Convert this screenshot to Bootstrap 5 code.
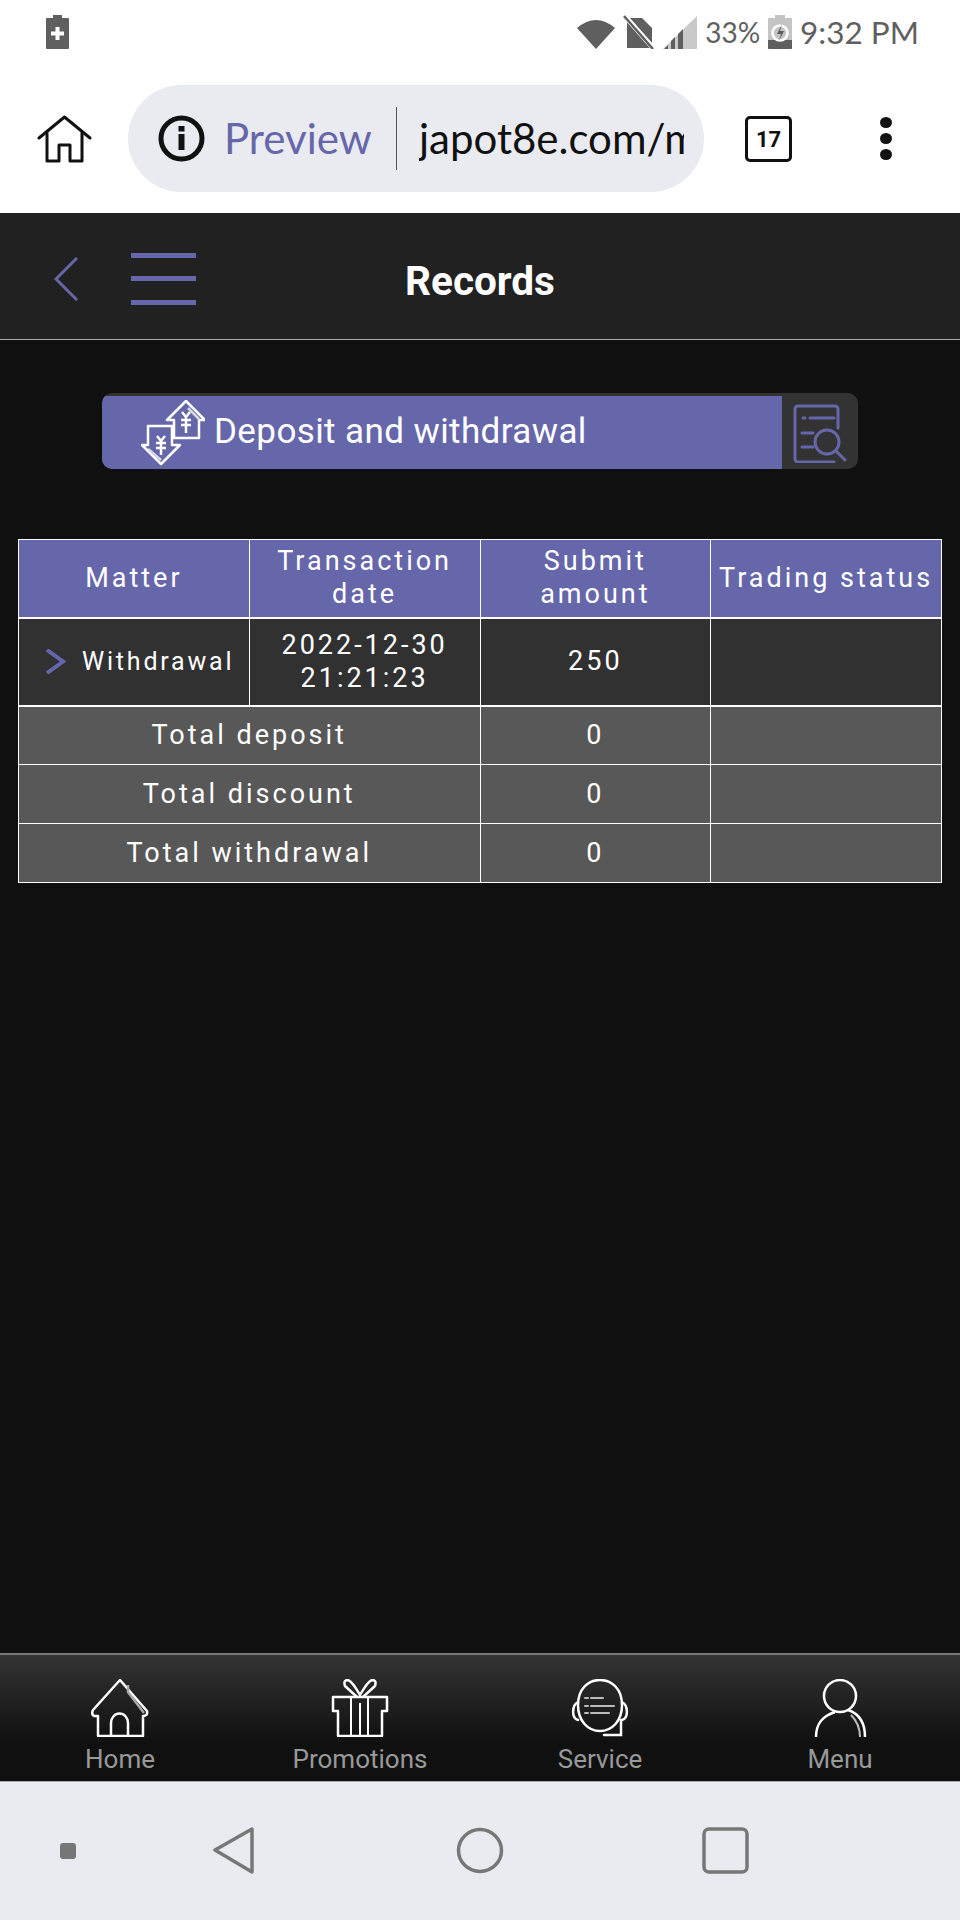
<!DOCTYPE html>
<html lang="en">
<head>
  <meta charset="UTF-8">
  <title>Records</title>
  <meta name="viewport" content="width=device-width, initial-scale=1.0"/>
  <link href="https://cdn.jsdelivr.net/npm/bootstrap@5.3.3/dist/css/bootstrap.min.css" rel="stylesheet">
  <style>
    body {
      background: #101010;
      font-family: Roboto, sans-serif;
    }
    .phone-page {
      height: 1920px;
      width: 960px;
      overflow: hidden;
    }
    .status-strip {
      height: 60px;
      background: #fff;
      padding: 15px 41px 0 46px;
      color: #5f5f5f;
      font-family: Lato, sans-serif;
      font-size: 31.500px;
      line-height: 34px;
    }
    .status-pct { font-size: 28px; }
    .browser-strip {
      height: 153px;
      background: #fff;
      padding: 25px 0 0 37px;
    }
    .home-icon { margin-top: 30px; }
    .url-pill {
      width: 576px;
      height: 107px;
      margin-left: 36px;
      margin-right: 41px;
      padding-left: 30px;
      background: #e9ebf0;
      border-radius: 54px;
      font-family: Lato, sans-serif;
      font-size: 42px;
      white-space: nowrap;
      overflow: hidden;
    }
    .url-preview { color: #6667aa; width: 172px; margin-left: 19px; }
    .url-line { width: 1px; height: 63px; background: #555; }
    .url-text { color: #111; margin-left: 22px; width: 265px; overflow: hidden; }
    .tabs-box {
      width: 47px;
      height: 46px;
      margin-top: 31px;
      border: 3px solid #111;
      border-radius: 5px;
      font-size: 22px;
      font-weight: 700;
      color: #111;
    }
    .more-dots { margin: 32px 0 0 88px; gap: 5px; }
    .more-dots span { width: 12px; height: 11px; background: #111; border-radius: 50%; }
    .top-header {
      height: 127px;
      background: #212121;
      border-bottom: 1px solid #aaa;
      padding: 5px 0 0 54px;
    }
    .hamburger { margin-left: 53px; }
    .top-title {
      left: 0;
      right: 0;
      top: 0;
      line-height: 136px;
      color: #fff;
      font-size: 40.500px;
      font-weight: 700;
      text-align: center;
    }
    .main-area { padding: 53px 18px 0; }
    .record-tab {
      margin: 0 84px 70px;
      height: 76px;
      border-radius: 10px;
      background: #333;
      overflow: hidden;
    }
    .record-tab-left {
      width: 680px;
      background: #6667aa;
      margin-top: 3px;
      padding-left: 39px;
      color: #fff;
      font-size: 35px;
      letter-spacing: .4px;
    }
    .record-tab-left span { margin-left: 9px; }
    .search-doc { margin-top: 4px; }
    .record-table {
      table-layout: fixed;
      margin: 0;
      --bs-table-color: #fff;
      --bs-table-border-color: #fff;
      border-color: #fff;
      font-size: 27px;
      letter-spacing: 3px;
      line-height: 33px;
      text-align: center;
    }
    .record-table td, .record-table th {
      padding: 0;
      vertical-align: middle;
      font-weight: 400;
      white-space: nowrap;
    }
    .record-table thead { --bs-table-bg: #6667aa; }
    .record-table thead th { height: 78px; border-bottom-width: 2px; }
    .row-record { --bs-table-bg: #313131; }
    .row-record td { height: 88px; border-bottom-width: 2px; }
    .row-total { --bs-table-bg: #585858; }
    .row-total td { height: 59px; }
    .matter-cell { font-size: 25px; letter-spacing: 2.800px; padding-left: 26px !important; }
    .bottom-nav {
      height: 128px;
      border-top: 2px solid #777;
      background: linear-gradient(#333, #101010 70%);
      color: #999;
      font-size: 26px;
      line-height: 30px;
    }
    .bottom-nav svg { display: block; margin: 24px auto 7px; }
    .android-bar {
      height: 139px;
      background: #e9ebf0;
      border-top: 1px solid #aaa;
    }
    .android-dot {
      left: 60px;
      top: 61px;
      width: 16px;
      height: 16px;
      background: #777;
      border-radius: 3px;
    }
    .android-bar svg { position: absolute; top: 45px; }
    .icon-back { left: 212px; }
    .icon-circle { left: 456px; }
    .icon-square { left: 702px; }
  </style>
</head>
<body class="m-0">
<div class="phone-page d-flex flex-column">

  <!-- status bar -->
  <div class="status-strip d-flex justify-content-between">
    <svg width="23" height="34" viewBox="0 0 23 34">
      <path d="M7 0h9v3h6a1 1 0 0 1 1 1v29a1 1 0 0 1-1 1H1a1 1 0 0 1-1-1V4a1 1 0 0 1 1-1h6z" fill="#5f5f5f"/>
      <path d="M9.500 12h4v4.500H18v4h-4.500V25h-4v-4.500H5v-4h4.500z" fill="#fff"/>
    </svg>
    <div class="d-flex align-items-start">
      <svg class="mt-1" width="38" height="30" viewBox="0 0 38 30"><path d="M0 9Q19-7 38 9L19 30z" fill="#5f5f5f"/></svg>
      <svg class="ms-2" width="32" height="34" viewBox="0 0 32 34">
        <path d="M4 3h15l10 10v20H4z" fill="#5f5f5f"/>
        <path d="M1 0l30 34" stroke="#fff" stroke-width="5"/>
        <path d="M1 1l29 33" stroke="#5f5f5f" stroke-width="2.500"/>
      </svg>
      <svg class="ms-2" width="34" height="34" viewBox="0 0 34 34">
        <path d="M34 1v33H0z" fill="#c9c9c9"/>
        <path d="M1 34l4-4v4zM8 34v-8l4-4v12zM15 34V19l5-5v20zM0 0" fill="#5f5f5f"/>
      </svg>
      <span class="status-pct ms-2">33%</span>
      <svg class="ms-2 mt-0" width="24" height="34" viewBox="0 0 24 34">
        <path d="M7 0h10v3h6a1 1 0 0 1 1 1v29a1 1 0 0 1-1 1H1a1 1 0 0 1-1-1V4a1 1 0 0 1 1-1h6z" fill="#c4c4c4"/>
        <path d="M0 25h24v8a1 1 0 0 1-1 1H1a1 1 0 0 1-1-1z" fill="#5f5f5f"/>
        <circle cx="12" cy="18" r="7.500" fill="none" stroke="#fff" stroke-width="2.500"/>
        <path d="M14 9l-5 10h4l-2 7 5-10h-4z" fill="#5f5f5f"/>
      </svg>
      <span class="ms-2">9:32 PM</span>
    </div>
  </div>

  <!-- browser toolbar -->
  <div class="browser-strip d-flex align-items-start">
    <svg class="home-icon flex-shrink-0" width="55" height="48" viewBox="0 0 55 48" fill="none" stroke="#111" stroke-width="3" stroke-linejoin="round" stroke-linecap="round">
      <path d="M2 23L27.500 2 53 23"/>
      <path d="M10 18v28h12V30h11v16h12V18"/>
    </svg>
    <div class="url-pill d-flex align-items-center flex-shrink-0">
      <svg class="flex-shrink-0" width="47" height="47" viewBox="0 0 47 47">
        <circle cx="23.500" cy="23.500" r="20.500" fill="none" stroke="#111" stroke-width="5"/>
        <path d="M20.500 19h6v16h-6zM20.500 11h6v5.500h-6z" fill="#111"/>
      </svg>
      <div class="url-preview flex-shrink-0">Preview</div>
      <div class="url-line flex-shrink-0"></div>
      <div class="url-text flex-shrink-0">japot8e.com/m</div>
    </div>
    <div class="tabs-box d-flex align-items-center justify-content-center flex-shrink-0">17</div>
    <div class="more-dots d-flex flex-column flex-shrink-0">
      <span class="d-block"></span><span class="d-block"></span><span class="d-block"></span>
    </div>
  </div>

  <!-- page header -->
  <div class="top-header position-relative d-flex align-items-center">
    <svg width="24" height="44" viewBox="0 0 24 44" fill="none" stroke="#6667aa" stroke-width="3"><path d="M23 1L2 22l21 21"/></svg>
    <svg class="hamburger" width="65" height="52" viewBox="0 0 65 52" fill="#6667aa">
      <path d="M0 0h65v5H0zM0 23h65v5H0zM0 47h65v5H0z"/>
    </svg>
    <div class="top-title position-absolute">Records</div>
  </div>

  <!-- records -->
  <div class="main-area flex-grow-1">
    <div class="record-tab d-flex">
      <div class="record-tab-left d-flex align-items-center">
        <svg class="flex-shrink-0" width="64" height="66" viewBox="0 0 64 66" fill="none" stroke="#fff" stroke-width="2.500" stroke-linejoin="round">
          <path d="M45 1L26 20H33V38H58V20H64z"/>
          <path d="M47 8L58 19" stroke="#d8d8ea"/>
          <path d="M45 17l-4-5M45 17l4-5M45 17V33M40 20H50M40 25H50"/>
          <path d="M7 26H31V45H39L20 64 1 45H7z"/>
          <path d="M7 49L20 60" stroke="#d8d8ea"/>
          <path d="M20 41l-4-5M20 41l4-5M20 41V55M15 43H25M15 48H25"/>
        </svg>
        <span>Deposit and withdrawal</span>
      </div>
      <div class="flex-grow-1 d-flex align-items-center justify-content-center">
        <svg class="search-doc" width="56" height="60" viewBox="0 0 56 60" fill="none" stroke="#6667aa" stroke-width="3" stroke-linecap="round">
          <path d="M46 25V6a3 3 0 0 0-3-3H6a3 3 0 0 0-3 3v50a3 3 0 0 0 3 3h36"/>
          <path d="M11 15h2M18 15h24M10 30h11M10 44h11"/>
          <circle cx="35" cy="39" r="12"/>
          <path d="M44 48l9 9"/>
        </svg>
      </div>
    </div>

    <table class="table table-bordered record-table">
      <thead>
        <tr>
          <th>Matter</th>
          <th>Transaction<br>date</th>
          <th>Submit<br>amount</th>
          <th>Trading status</th>
        </tr>
      </thead>
      <tbody>
        <tr class="row-record">
          <td class="matter-cell">
            <div class="d-flex align-items-center gap-3">
              <svg class="flex-shrink-0" width="21" height="25" viewBox="0 0 21 25" fill="none" stroke="#6667aa" stroke-width="4"><path d="M2 1l16 11.500L2 24"/></svg>
              <span>Withdrawal</span>
            </div>
          </td>
          <td>2022-12-30<br>21:21:23</td>
          <td>250</td>
          <td></td>
        </tr>
        <tr class="row-total"><td colspan="2">Total deposit</td><td>0</td><td></td></tr>
        <tr class="row-total"><td colspan="2">Total discount</td><td>0</td><td></td></tr>
        <tr class="row-total"><td colspan="2">Total withdrawal</td><td>0</td><td></td></tr>
      </tbody>
    </table>
  </div>

  <!-- bottom menu -->
  <div class="bottom-nav row g-0 text-center flex-shrink-0">
    <div class="col-3">
      <svg width="58" height="58" viewBox="0 0 58 58" fill="none" stroke="#fff" stroke-width="2.500" stroke-linejoin="round">
        <path d="M7 57V37H3Q0 35 2 31L29 1 42 16 56 32Q57 37 52 37V57z"/>
        <path d="M20 57V44a8 9 0 0 1 17 0v13"/>
        <path d="M37 6V13L53 34" stroke="#aaa"/>
      </svg>
      Home
    </div>
    <div class="col-3">
      <svg width="58" height="58" viewBox="0 0 58 58" fill="none" stroke="#fff" stroke-width="2.500" stroke-linejoin="round">
        <path d="M2 18h54v14h-5v25H7V32H2z"/>
        <path d="M26 18L14 7q-2-6 3-6 4 1 12 15Q37 2 41 1q5 0 3 6L32 18"/>
        <path d="M20 18v39M37 18v39M29 24v33" stroke-width="2"/>
      </svg>
      Promotions
    </div>
    <div class="col-3">
      <svg width="58" height="58" viewBox="0 0 58 58" fill="none" stroke="#fff" stroke-width="2.500" stroke-linecap="round">
        <path d="M7 26C7 10 17 1 29 1s22 9 22 25c0 16-10 26-22 26S7 42 7 26z"/>
        <path d="M7 23C1 26 0 39 7 41M51 23C57 26 58 39 51 41"/>
        <path d="M50 41v15H33"/>
        <path d="M14 19h3M20 19h12M14 27h3M20 27h23M14 34h3M20 34h18" stroke="#bbb" stroke-width="2"/>
      </svg>
      Service
    </div>
    <div class="col-3">
      <svg width="58" height="58" viewBox="0 0 58 58" fill="none" stroke="#fff" stroke-width="2.500">
        <ellipse cx="29" cy="17" rx="16" ry="16"/>
        <path d="M5 58C5 44 12 37 24 33M37 31C49 35 54 45 54 58"/>
        <path d="M40 36c6 6 9 13 9 22" stroke="#bbb" stroke-width="2"/>
      </svg>
      Menu
    </div>
  </div>

  <!-- android buttons -->
  <div class="android-bar position-relative flex-shrink-0">
    <div class="android-dot position-absolute"></div>
    <svg class="icon-back" width="44" height="47" viewBox="0 0 44 47" fill="none" stroke="#777" stroke-width="3.500" stroke-linejoin="round"><path d="M40 2v43L3 23z"/></svg>
    <svg class="icon-circle" width="48" height="47" viewBox="0 0 48 47" fill="none" stroke="#777" stroke-width="3.500"><ellipse cx="24" cy="23.500" rx="21.500" ry="21"/></svg>
    <svg class="icon-square" width="47" height="47" viewBox="0 0 47 47" fill="none" stroke="#777" stroke-width="3.500"><rect x="2" y="2" width="43" height="43" rx="5"/></svg>
  </div>
</div>
<script src="https://cdn.jsdelivr.net/npm/bootstrap@5.3.3/dist/js/bootstrap.bundle.min.js"></script>
</body>
</html>
